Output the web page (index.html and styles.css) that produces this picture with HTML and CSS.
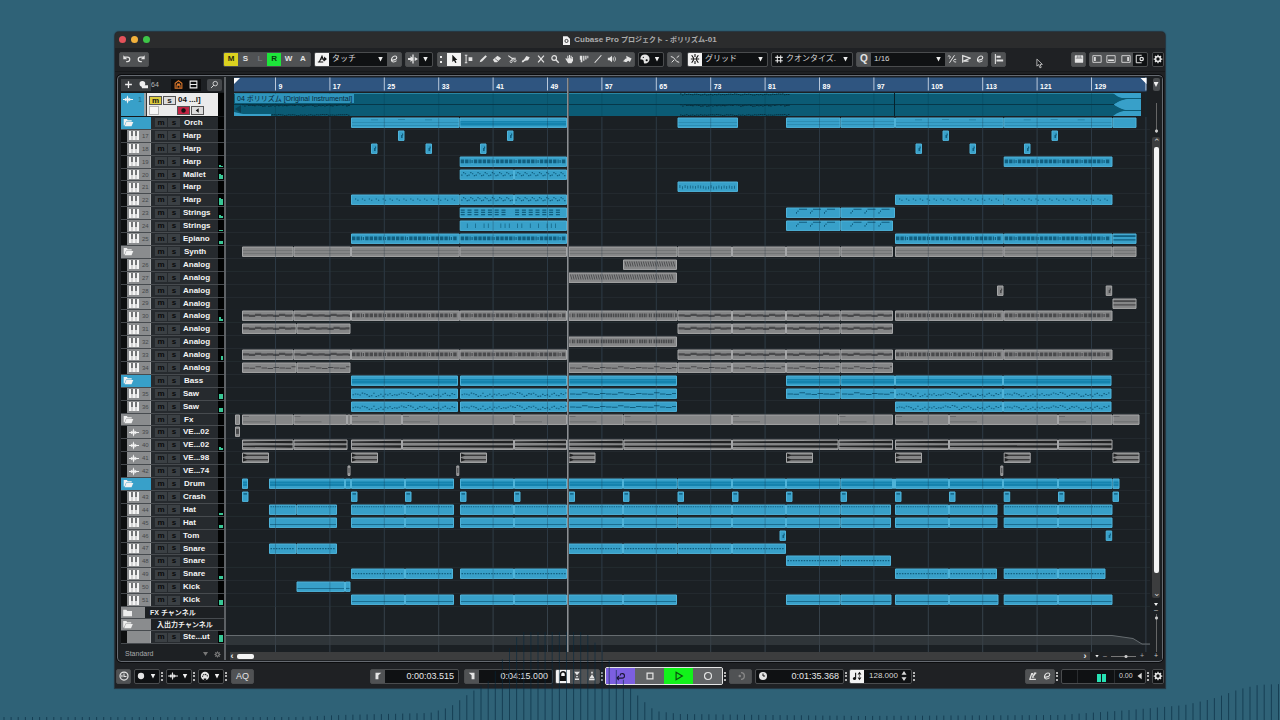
FILE: index.html
```html
<!DOCTYPE html>
<html lang="ja">
<head>
<meta charset="utf-8">
<title>Cubase Pro プロジェクト - ポリリズム-01</title>
<link rel="stylesheet" href="styles.css">
</head>
<body>
<svg class="sprite" aria-hidden="true">
  <symbol id="undo" viewBox="0 0 12 12"><path d="M3 3.6h3.6a2.6 2.6 0 0 1 0 5.4H5" fill="none" stroke="currentColor" stroke-width="1.5"/><path d="M1.6 1.4v4.8h4.6z"/></symbol>
  <symbol id="redo" viewBox="0 0 12 12"><path d="M9 3.6H5.4a2.6 2.6 0 0 0 0 5.4H7" fill="none" stroke="currentColor" stroke-width="1.5"/><path d="M10.4 1.4v4.8H5.8z"/></symbol>
  <symbol id="auto" viewBox="0 0 12 12"><path d="M1 9.500h6.500M3 9 6 2.500 8 8M5 6h6" fill="none" stroke="currentColor" stroke-width="1.300"/><path d="m8.500 3 3.300 3-3.300 3z"/></symbol>
  <symbol id="edit" viewBox="0 0 12 12"><path d="M3 7.2c3 .6 6.600-.8 6.300-3.200C9 1.800 5.600 2 3.900 4.300 2 7 3 9.700 5.400 9.600c1.400 0 2.600-.7 3.600-1.600" fill="none" stroke="currentColor" stroke-width="1.300"/></symbol>
  <symbol id="scroll" viewBox="0 0 12 12"><path d="M5.200 .5h1.600v11H5.200zM0 4.800h3V2.500L7 6 3 9.500V7.200H0zM8 3.500 12 6 8 8.500z"/></symbol>
  <symbol id="pointer" viewBox="0 0 12 12"><path d="M4 1v8.500l2-1.800 1.500 3.200 1.500-.7-1.500-3.100H10z"/></symbol>
  <symbol id="range" viewBox="0 0 12 12"><path d="M1 1.500h3M1 10.500h3M2.500 1.500v9" fill="none" stroke="currentColor" stroke-width="1.200"/><path d="M5.500 4h4.500v4.500H5.500z"/></symbol>
  <symbol id="pencil" viewBox="0 0 12 12"><path d="m2 10 1-2.800L9 1.500 10.700 3 4.800 9z"/></symbol>
  <symbol id="eraser" viewBox="0 0 12 12"><path d="m1 7 5.500-5L11 5 6 10H3z"/><path d="m3.500 5.500 4 3" stroke="#505254" stroke-width=".8"/></symbol>
  <symbol id="scissors" viewBox="0 0 12 12"><path d="M1.500 2 8 6.500M5.500 5h5M6 5v3" fill="none" stroke="currentColor" stroke-width="1.300"/><circle cx="9.500" cy="8" r="1.400" fill="none" stroke="currentColor"/><circle cx="5" cy="9" r="1.300" fill="none" stroke="currentColor"/></symbol>
  <symbol id="glue" viewBox="0 0 12 12"><path d="M1 10c0-3 2-2 3-4l2.500-3.500 4 1.500-2 3.500L5 8c-1 0-1 2-4 2z"/></symbol>
  <symbol id="mute" viewBox="0 0 12 12"><path d="m2.500 2 7 8m0-8-7 8" stroke="currentColor" stroke-width="1.500"/></symbol>
  <symbol id="search" viewBox="0 0 12 12"><circle cx="5" cy="4.800" r="2.800" fill="none" stroke="currentColor" stroke-width="1.400"/><path d="m7 7 3.500 3.500" stroke="currentColor" stroke-width="1.700"/></symbol>
  <symbol id="find" viewBox="0 0 12 12"><circle cx="7" cy="4.800" r="3" fill="none" stroke="currentColor"/><path d="m5 7-3.500 3.500" stroke="currentColor" stroke-width="1.200"/></symbol>
  <symbol id="hand" viewBox="0 0 12 12"><path d="M1.500 5.500 3 5l1 1.500V2h1.200v3H6V1.200h1.300V5H8V2h1.200v4h.6V3.500h1V8L9 11H5z"/></symbol>
  <symbol id="comp" viewBox="0 0 12 12"><path d="M1 2h3v8H2V7H1zM5 2h1.500v6H5zM7.500 2H9v4.500H7.500zM10 2h1.200v3H10z"/></symbol>
  <symbol id="line" viewBox="0 0 12 12"><path d="m2 10.500 8-9" stroke="currentColor" stroke-width="1.300"/></symbol>
  <symbol id="speaker" viewBox="0 0 12 12"><path d="M1 4.500h2L6 2v8L3 7.500H1z"/><path d="M7.500 4v4M9 3c1.500 2 1.500 4 0 6" fill="none" stroke="currentColor"/></symbol>
  <symbol id="bucket" viewBox="0 0 12 12"><path d="m5 2 6.500 3.500L9.500 9.500 7.500 8 5 10 .5 8.500c3 0 2-3 5-3z"/></symbol>
  <symbol id="palette" viewBox="0 0 12 12"><path d="M6 .5A5.500 5.500 0 0 0 .5 5.500C.5 8 3 6.500 4 7.500s0 4 2 4a5.500 5.500 0 0 0 0-11z"/><circle cx="4" cy="4" r=".8" fill="#0c0e10"/><circle cx="8" cy="7.500" r="1.300" fill="#0c0e10"/></symbol>
  <symbol id="snapcurve" viewBox="0 0 12 12"><path d="M1 3c5 0 5 7 10 7M2 10l3-3M8 4.500 11 2" fill="none" stroke="currentColor" stroke-width="1.200"/></symbol>
  <symbol id="snap" viewBox="0 0 12 12"><path d="M6 0v3.500M6 8.500V12M2 1.500l3 4.500-3 4.500M10 1.500 7 6l3 4.500M1 6h3M8 6h3" fill="none" stroke="currentColor" stroke-width="1.300"/></symbol>
  <symbol id="hash" viewBox="0 0 12 12"><path d="M4 1.500v9M8 1.500v9M1.500 4h9M1.500 8h9" stroke="currentColor" stroke-width="1.300"/></symbol>
  <symbol id="soft" viewBox="0 0 12 12"><path d="m9 1.500-6 9M1 3c2-2 4 0 2 2.500M11 6.500c-4-1-4 4 0 3" fill="none" stroke="currentColor" stroke-width="1.200"/></symbol>
  <symbol id="flag" viewBox="0 0 12 12"><path d="M2 10.500V2l9 3L3 8.500h6" fill="none" stroke="currentColor" stroke-width="1.400"/></symbol>
  <symbol id="align" viewBox="0 0 12 12"><path d="M1 0h1.300v12H1zM3 2h5v2.600H3zM3 6.500h8V9H3z"/></symbol>
  <symbol id="window" viewBox="0 0 12 12"><rect x="1" y="1.500" width="10" height="9" rx="1"/><path d="M2 5h8M4 1.500V5M6 1.500V5M8 1.500V5" stroke="#6b6d70" stroke-width=".8"/></symbol>
  <symbol id="zleft" viewBox="0 0 12 12"><path d="M1 2h10v8H1z" fill="none" stroke="currentColor"/><path d="M2.500 3.500h2v5h-2z"/></symbol>
  <symbol id="zdown" viewBox="0 0 12 12"><path d="M1 2h10v8H1z" fill="none" stroke="currentColor"/><path d="M2.500 6.500h7v2h-7z"/></symbol>
  <symbol id="zright" viewBox="0 0 12 12"><path d="M1 2h10v8H1z" fill="none" stroke="currentColor"/><path d="M7.500 3.500h2v5h-2z"/></symbol>
  <symbol id="zset" viewBox="0 0 12 12"><path d="M8 1.500H1.500v9H8" fill="none" stroke="currentColor" stroke-width="1.200"/><circle cx="8" cy="6" r="2" fill="none" stroke="currentColor" stroke-width="1.500"/></symbol>
  <symbol id="gear" viewBox="0 0 12 12"><circle cx="6" cy="6" r="3" fill="none" stroke="currentColor" stroke-width="2"/><path d="M6 .8v2M6 9.200v2M.8 6h2M9.200 6h2M2.300 2.300l1.500 1.500M8.200 8.200l1.500 1.500M2.300 9.700l1.500-1.500M8.200 3.800l1.500-1.500" stroke="currentColor" stroke-width="1.500"/></symbol>
  <symbol id="doc" viewBox="0 0 8 10"><path d="M0 0h5l3 3v7H0z"/><circle cx="4" cy="5.500" r="1.800" fill="none" stroke="#2b2c2d"/></symbol>
  <symbol id="piano" viewBox="0 0 10 9"><path d="M0 0h2v5h.700v4H0zM3.900 0h2.200v5h.6v4H3.300V5h.6zM8 0h2v9H7.300V5H8z" fill="#f4f4f4"/><path d="M2 0h1.900v5H2zM6.100 0H8v5H6.100z" fill="#707274"/></symbol>
  <symbol id="wave" viewBox="0 0 12 10"><path d="M0 4.500h2L3 3l1 1.500L5.200 0 7 4.500 8 3l1 1.500h3v1H9L8 7 7 5.500 5.500 10 4 5.500 3 7 2 5.500H0z"/></symbol>
  <symbol id="open" viewBox="0 0 12 10"><path d="M0 0h4l1 1.500h5V3H3L1 8H0z"/><path d="M3.300 3.700H12L9.800 9H1.200z"/></symbol>
  <symbol id="closed" viewBox="0 0 12 10"><path d="M0 1h4l1 1.500h6V9H0z"/></symbol>
  <symbol id="plus" viewBox="0 0 12 12"><path d="M6 1.500v9M1.500 6h9" stroke="currentColor" stroke-width="1.700"/></symbol>
  <symbol id="clouds" viewBox="0 0 12 12"><circle cx="4.500" cy="5" r="3.800"/><path d="M3 7h9v4H4z"/></symbol>
  <symbol id="house" viewBox="0 0 12 12"><path d="M1.500 11V4.500L6 1l4.500 3.500V11zM4 11V7h4v4M4 5.500h4" fill="none" stroke="currentColor" stroke-width="1.400"/></symbol>
  <symbol id="list" viewBox="0 0 12 12"><path d="M1.500 1.500h9v9h-9zM1.500 6h9" fill="none" stroke="currentColor" stroke-width="1.400"/></symbol>
  <symbol id="ring" viewBox="0 0 12 12"><circle cx="6" cy="6" r="4.800" fill="none" stroke="currentColor" stroke-width="1.500"/><path d="M6 3v3.500h3M3.500 4.500v3" fill="none" stroke="currentColor" stroke-width="1.300"/></symbol>
  <symbol id="dot" viewBox="0 0 12 12"><circle cx="6" cy="6" r="3.800"/></symbol>
  <symbol id="midi" viewBox="0 0 12 12"><circle cx="6" cy="6" r="5"/><path d="M3 7a3 3 0 0 1 6 0" fill="none" stroke="#0c0e10" stroke-width="1.300" stroke-dasharray="1.400 1"/><path d="M4.500 11V9h3v2z" fill="#0c0e10"/></symbol>
  <symbol id="locl" viewBox="0 0 12 12"><path d="M3 2h7L6.500 5v5H3z"/></symbol>
  <symbol id="locr" viewBox="0 0 12 12"><path d="M9 2H2l3.500 3v5H9z"/></symbol>
  <symbol id="lock" viewBox="0 0 12 12"><path d="M3 11V4a3 3 0 0 1 6 0v7z" fill="none" stroke="currentColor" stroke-width="1.800"/><path d="M3 6h6v5H3z"/></symbol>
  <symbol id="pin" viewBox="0 0 12 12"><path d="M2.500 1h7L6 5zM5 6h2v1.500H5zM3.500 9h5v1.800h-5z"/></symbol>
  <symbol id="pout" viewBox="0 0 12 12"><path d="M5 1h2v2H5zM6 4l3 4.500H3zM2.500 9h7v2h-7z"/></symbol>
  <symbol id="cycle" viewBox="0 0 12 12"><path d="M1 8.500h6.500a2.700 2.700 0 1 0-2.700-3M1 8.500 3.500 6M1 8.500 3.500 11" fill="none" stroke="currentColor" stroke-width="1.300"/></symbol>
  <symbol id="stop" viewBox="0 0 12 12"><path d="M2.500 2.500h7v7h-7z" fill="none" stroke="currentColor" stroke-width="1.500"/></symbol>
  <symbol id="play" viewBox="0 0 12 12"><path d="M2.500 1.500 10 6l-7.500 4.500z" fill="none" stroke="currentColor" stroke-width="1.400"/></symbol>
  <symbol id="rec" viewBox="0 0 12 12"><circle cx="6" cy="6" r="4.200" fill="none" stroke="currentColor" stroke-width="1.400"/></symbol>
  <symbol id="moon" viewBox="0 0 12 12"><path d="M6 2a4 4 0 1 1 0 8" fill="none" stroke="currentColor" stroke-width="1.600"/><circle cx="4.500" cy="6" r="1.500"/></symbol>
  <symbol id="clock" viewBox="0 0 12 12"><circle cx="6" cy="6" r="4.800"/><path d="M6 3v3h2.500" fill="none" stroke="#111" stroke-width="1.200"/></symbol>
  <symbol id="tempo" viewBox="0 0 12 12"><circle cx="3" cy="9" r="1.900"/><path d="M3.700 2H5v7H3.700zM9 1l2.300 3.300H6.700zM9 11 6.700 7.700h4.600zM8.300 5.300h1.400v1.400H8.300z"/></symbol>
  <symbol id="metro" viewBox="0 0 12 12"><path d="M2 10.500 4.500 3h1L7 8M1.500 10h8M5 8l4.500-6M7 2.500h3" fill="none" stroke="currentColor" stroke-width="1.500"/></symbol>
  <symbol id="updown" viewBox="0 0 8 12"><path d="m4 0 3 4.500H1zM4 12 1 7.500h6z"/></symbol>
  <symbol id="mon" viewBox="0 0 12 12"><path d="M8 2v8L3 6z"/></symbol>
</svg>

<main class="window">
  <header class="titlebar">
    <div class="lights"><i class="red"></i><i class="amber"></i><i class="green"></i></div>
    <h1 class="title"><svg class="doc"><use href="#doc"/></svg>Cubase Pro <span class="jp">プロジェクト</span> - <span class="jp">ポリリズム</span>-01</h1>
  </header>

  <nav class="toolbar">
    <div class="group history"><button aria-label="元に戻す"><svg><use href="#undo"/></svg></button><button aria-label="やり直す"><svg><use href="#redo"/></svg></button></div>
    <div class="group states"><button class="yellow">M</button><button>S</button><button class="faint">L</button><button class="lime">R</button><button>W</button><button>A</button></div>
    <div class="group mode">
      <button class="lit" aria-label="オートメーション"><svg><use href="#auto"/></svg></button>
      <div class="drop"><select aria-label="オートメーションモード"><option>タッチ</option></select></div>
      <button aria-label="設定"><svg><use href="#edit"/></svg></button>
    </div>
    <div class="group follow"><button aria-label="オートスクロール"><svg><use href="#scroll"/></svg></button><button class="dark arrow" aria-label="スクロール設定"></button></div>
    <div class="group tools" id="tools"></div>
    <div class="group colors"><button class="dark" aria-label="カラー"><svg><use href="#palette"/></svg></button><button class="dark arrow" aria-label="カラーメニュー"></button></div>
    <div class="group single"><button aria-label="ゼロクロス"><svg><use href="#snapcurve"/></svg></button></div>
    <div class="group snap"><button class="lit" aria-label="スナップ"><svg><use href="#snap"/></svg></button><div class="drop"><select aria-label="スナップタイプ"><option>グリッド</option></select></div></div>
    <div class="group quant"><button class="dark" aria-label="グリッドタイプ"><svg><use href="#hash"/></svg></button><div class="drop"><select aria-label="グリッド間隔"><option>クオンタイズ.</option></select></div></div>
    <div class="group value"><button class="big">Q</button><div class="drop"><select aria-label="クオンタイズ値"><option>1/16</option></select></div><button aria-label="ソフト"><svg><use href="#soft"/></svg></button><button aria-label="適用"><svg><use href="#flag"/></svg></button><button aria-label="パネル"><svg><use href="#edit"/></svg></button></div>
    <div class="group single"><button aria-label="整列"><svg><use href="#align"/></svg></button></div>
    <div class="group single right"><button aria-label="ワークスペース"><svg><use href="#window"/></svg></button></div>
    <div class="group zones"><button aria-label="左ゾーン"><svg><use href="#zleft"/></svg></button><button aria-label="下ゾーン"><svg><use href="#zdown"/></svg></button><button aria-label="右ゾーン"><svg><use href="#zright"/></svg></button><button class="dark" aria-label="レイアウト"><svg><use href="#zset"/></svg></button></div>
    <div class="group cog"><button class="dark" aria-label="ツールバー設定"><svg><use href="#gear"/></svg></button></div>
  </nav>

  <section class="project">
    <div class="list">
      <div class="list-head">
        <button aria-label="トラックを追加"><svg><use href="#plus"/></svg></button>
        <button aria-label="プリセット"><svg><use href="#clouds"/></svg></button>
        <span class="count">64</span>
        <button class="orange black" aria-label="表示"><svg><use href="#house"/></svg></button>
        <button class="black" aria-label="一覧"><svg><use href="#list"/></svg></button>
        <button class="find" aria-label="検索"><svg><use href="#find"/></svg></button>
      </div>
      <div class="selected">
        <div class="tag"><svg><use href="#wave"/></svg><span>1</span></div>
        <div class="strip"></div>
        <div class="body">
          <div class="line"><button class="ms on">m</button><button class="ms">s</button><b>04 ...l]</b></div>
          <div class="line second"><input type="checkbox" aria-label="フリーズ"><button class="arm" aria-label="録音可能"><svg><use href="#dot"/></svg></button><button class="ms" aria-label="モニター"><svg><use href="#mon"/></svg></button></div>
        </div>
        <div class="meter"></div>
      </div>
      <div class="tracks" id="tracks"></div>
      <div class="extra"><div class="chan"><svg><use href="#closed"/></svg><span>FX チャンネル</span></div><div class="chan io"><svg><use href="#open"/></svg><span>入出力チャンネル</span></div></div>
      <div id="output"></div>
      <div class="list-foot"><span>Standard</span><i class="tri"></i><svg><use href="#gear"/></svg></div>
    </div>

    <div class="timeline" id="timeline">
      <div class="ruler" id="ruler"></div>
      <div class="event" id="event"><span>04 ポリリズム [Original Instrumental]</span></div>
      <div class="lanes" id="lanes"></div>
      <div class="lower" id="lower"></div>
      <div class="hscroll"><i class="chev">‹</i><i class="thumb"></i><i class="chev end">›</i><div class="hzoom"><i class="tri"></i><span>–</span><i class="rail"></i><span>+</span></div></div>
      <div class="playhead"></div>
    </div>

    <div class="side">
      <button class="arrow" aria-label="ルーラー設定"></button>
      <div class="wavezoom"></div>
      <div class="vscroll"><i class="chev">⌃</i><i class="bar"></i><i class="chev">⌄</i></div>
      <div class="vzoom"><i class="tri"></i><span>–</span><i class="rail"></i><span>+</span></div>
    </div>
  </section>

  <footer class="transport">
    <div class="group single"><button aria-label="アクティブ"><svg><use href="#ring"/></svg></button></div>
    <div class="group pair"><button class="dark" aria-label="録音モード"><svg><use href="#dot"/></svg></button><button class="dark arrow" aria-label="録音メニュー"></button></div><i class="grip"></i>
    <div class="group pair"><button class="dark" aria-label="オーディオ"><svg><use href="#wave"/></svg></button><button class="dark arrow" aria-label="オーディオメニュー"></button></div><i class="grip"></i>
    <div class="group pair"><button class="dark" aria-label="MIDI"><svg><use href="#midi"/></svg></button><button class="dark arrow" aria-label="MIDIメニュー"></button></div><i class="grip"></i>
    <div class="group aq"><button>AQ</button></div>
    <div class="group locator first"><button aria-label="左ロケーター"><svg><use href="#locl"/></svg></button><output>0:00:03.515</output></div>
    <div class="group locator"><button aria-label="右ロケーター"><svg><use href="#locr"/></svg></button><output>0:04:15.000</output></div>
    <div class="group punch"><button class="lit" aria-label="ロック"><svg><use href="#lock"/></svg></button><button aria-label="パンチイン"><svg><use href="#pin"/></svg></button><button aria-label="パンチアウト"><svg><use href="#pout"/></svg></button></div><i class="grip tight"></i>
    <div class="group play"><button class="purple" aria-label="サイクル"><svg><use href="#cycle"/></svg></button><button aria-label="停止"><svg><use href="#stop"/></svg></button><button class="go" aria-label="再生"><svg><use href="#play"/></svg></button><button aria-label="録音"><svg><use href="#rec"/></svg></button></div><i class="grip"></i>
    <div class="group off"><button aria-label="プリロール" disabled><svg><use href="#moon"/></svg></button></div>
    <div class="group locator now"><button class="dark" aria-label="時間形式"><svg><use href="#clock"/></svg></button><output>0:01:35.368</output></div><i class="grip tight"></i>
    <div class="group tempo"><button class="lit" aria-label="テンポトラック"><svg><use href="#tempo"/></svg></button><output>128.000</output><svg><use href="#updown"/></svg></div><i class="grip"></i>
    <div class="group click"><button aria-label="メトロノーム"><svg><use href="#metro"/></svg></button><button aria-label="クリック設定"><svg><use href="#edit"/></svg></button></div><i class="grip"></i>
    <div class="group level"><div class="cell"></div><div class="cell vu"><i></i><i></i></div><output>0.00</output><svg><use href="#mon"/></svg></div><i class="grip tight"></i>
    <div class="group cog"><button class="dark" aria-label="トランスポート設定"><svg><use href="#gear"/></svg></button></div>
  </footer>
  <svg class="cursor" viewBox="0 0 8 12"><path d="M1 1v8l2-1.800L4.500 11l1.500-.7L4.600 7H7.300z" fill="#15171a" stroke="#d8d8d8" stroke-width=".9"/></svg>
</main>
<svg class="spectrum" id="spectrum" viewBox="0 0 1280 100" preserveAspectRatio="none" aria-hidden="true"></svg>
<script src="script.js"></script>
</body>
</html>
```

FILE: styles.css
```css
* { box-sizing: border-box; }
:root { --lanes: 490px; --blue: #38a0c9; }
body { margin: 0; min-height: 100vh; padding: 32px 115px; background: #2f6277; overflow: hidden; position: relative; font-family: "Liberation Sans", "Noto Sans CJK JP", sans-serif; font-size: 8px; line-height: 10px; color: #d8d8d8; }
svg { fill: currentColor; display: block; flex: none; }
.sprite { position: absolute; width: 0; height: 0; }
button, select, output { font: inherit; color: inherit; }
button { border: 0; margin: 0; padding: 0; background: none; display: flex; align-items: center; justify-content: center; min-width: 0; }
i { font-style: normal; }

.window { position: relative; background: #1f2124; box-shadow: 0 0 1px 1px #26333c; border-radius: 4px 4px 0 0; }
.titlebar { position: relative; display: flex; align-items: center; justify-content: center; height: 16px; background: #2b2c2d; border-radius: 4px 4px 0 0; }
.lights { position: absolute; left: 4px; top: 4px; display: flex; gap: 5px; }
.lights i { width: 7px; height: 7px; border-radius: 50%; }
.red { background: #e4525a; }
.amber { background: #f2b13c; }
.green { background: #3ec648; }
.title { margin: 0; display: flex; align-items: center; white-space: pre; font-size: 8px; font-weight: bold; color: #adadad; }
.title .jp { font-size: 7px; }
.doc { width: 7px; height: 9px; margin-right: 4px; color: #f2f2f2; }

.toolbar { display: flex; align-items: center; height: 24px; padding: 0 1px 1px 4px; gap: 3px; border-bottom: 1px solid #17191b; }
.group { display: flex; height: 15px; background: #505254; border: 1px solid #4a4c4e; border-radius: 2px; overflow: hidden; flex: none; }
.group button { flex: 1; font-weight: bold; font-size: 8px; color: #e4e4e4; }
.group svg { width: 10px; height: 10px; }
.history { width: 30px; margin-right: 71px; }
.states { width: 88px; }
.group .yellow { background: #dcd21f; color: #2a2a10; }
.group .lime { background: #1de53a; color: #0b3a12; }
.group .faint { color: #77797b; }
.group .lit { background: #f3f3f3; color: #111; }
.group .dark, .drop { background: #0f1113; }
.group .big { font-size: 10px; }
.mode { width: 88px; }
.mode button, .snap button, .quant button { flex: 0 0 14px; }
.value button { flex: 0 0 14px; }
.drop { position: relative; flex: 1; display: flex; }
.drop select { appearance: none; border: 0; background: none; width: 100%; padding: 0 3px; font-size: 8px; outline: 0; }
.quant .drop select { padding: 0; }
.arrow::after, .drop::after, .tri { content: ""; width: 5px; height: 5px; background: #f0f0f0; clip-path: polygon(0 0, 100% 0, 50% 100%); }
.drop::after { position: absolute; right: 4px; top: 4px; }
.follow { width: 28px; margin-right: 1px; }
.tools { width: 198px; }
.tools .handle { flex: 0 0 7px; border-left: 2px dotted #eee; margin: 3px 0 3px 2px; }
.colors { width: 26px; }
.single { width: 15px; }
.snap { width: 81px; margin-left: 2px; }
.quant { width: 82px; }
.value { width: 132px; }
.right { margin-left: auto; }
.zones { width: 59px; }
.cog { width: 12px; margin-left: 1px; }

.project { display: grid; grid-template-columns: 105px 1fr 12px; margin: 3px 2px 2px; padding: 1px 0 1px 3px; border: 1px solid #656a71; border-radius: 4px; background: #1d2023; outline: 1px solid #0b0c0e; }
.list { border-right: 2px solid #5d6165; background: #15181a; }
.list-head { display: flex; align-items: center; height: 15px; background: #1d2023; color: #f0f0f0; }
.list-head button { width: 15px; height: 12px; background: #3a3d40; }
.list-head svg { width: 9px; height: 9px; }
.count { flex: 1; font-size: 7px; color: #b8b8b8; }
.list-head .black { background: #0c0d0e; }
.list-head .orange { color: #e07a2c; }
.list-head .find { background: #44474a; border-radius: 2px; margin: 0 2px 0 6px; }
.selected { display: flex; height: 25px; padding: 1px 0; }
.tag { width: 23px; display: flex; gap: 5px; padding: 2px; background: var(--blue); color: #f4f4f4; }
.tag svg { width: 10px; height: 9px; }
.tag span { font-size: 7px; color: #1c6687; }
.strip { width: 3px; background: #9aa4a8; border-right: 1px solid #333; }
.selected .body { flex: 1; background: #ebebeb; padding: 2px; color: #151515; }
.line { display: flex; align-items: center; height: 10px; gap: 1px; }
.line b { font-size: 8px; margin-left: 1px; white-space: nowrap; }
.selected .ms { width: 13px; height: 9px; background: #ddd; border: 1px solid #555; font-weight: bold; font-size: 8px; line-height: 7px; }
.selected .on { background: #dccb3e; }
.second input { appearance: none; margin: 0 17px 0 0; width: 10px; height: 9px; border: 1px solid #b5b5b5; background: #f7f7f7; }
.arm { width: 13px; height: 9px; background: #c22443; border: 1px solid #555; }
.line svg { width: 7px; height: 7px; }
.meter { width: 6px; background: #020303; display: flex; align-items: flex-end; padding: 1px; }
.meter i { flex: 1; background: #38c795; }

.tracks { display: grid; grid-auto-rows: 1fr; height: var(--lanes); }
.track { display: flex; min-height: 0; overflow: hidden; background: #262a2e; border-bottom: 1px solid #474b4f; color: #f4f4f4; }
.badge { width: 30px; display: flex; align-items: center; background: #8a8c8e; border-left: 6px solid #0d0f10; border-right: 1px solid #a0a3a5; gap: 3px; padding-left: 2px; font-size: 6px; color: #45484a; }
.badge svg { width: 10px; height: 9px; color: #f2f2f2; }
.folder .badge { border-left: 0; }
.folder .badge svg { width: 11px; height: 8px; }
.folder.blue .badge { background: var(--blue); border-right-color: var(--blue); }
.track .pair-ms { display: flex; gap: 1px; align-items: center; margin-left: 4px; }
.track .pair-ms button { width: 12px; height: 9px; background: #3b4044; color: #090a0b; font-weight: bold; font-size: 8px; line-height: 8px; }
.track b { flex: 1; padding-left: 3px; line-height: 12px; white-space: nowrap; }
.folder b { padding-left: 4px; }
.extra { height: 24px; }
.chan { display: flex; align-items: center; height: 12px; border-bottom: 1px solid #474b4f; background: linear-gradient(90deg, #8a8c8e 24px, #1d2023 24px); font-weight: bold; font-size: 7px; color: #eee; padding-left: 2px; }
.chan svg { width: 10px; height: 8px; }
.chan span { margin-left: 17px; white-space: nowrap; }
.chan.io { background: linear-gradient(90deg, #8a8c8e 30px, #1d2023 30px); }
.chan.io span { margin-left: 24px; }
#output .track { height: 13px; }
.list-foot { display: flex; align-items: center; height: 16px; padding: 4px 3px 0 4px; gap: 6px; font-size: 7px; color: #a9abad; background: #1d2023; }
.list-foot span { flex: 1; }
.list-foot .tri { background: #777; height: 4px; }
.list-foot svg { width: 7px; height: 7px; color: #888; }

.timeline { position: relative; min-width: 0; background: #1b2024; }
.timeline svg { width: 100%; height: 100%; }
.ruler { height: 15px; position: relative; }
.ruler span { position: absolute; top: 5px; font-size: 7px; font-weight: bold; color: #fff; padding-left: 3px; }
.event { position: relative; height: 25px; }
.event span { position: absolute; left: 9px; top: 2px; padding: 0 2px; background: #2f94bc; color: #08283a; font-size: 7px; line-height: 9px; white-space: nowrap; }
.lanes { display: grid; grid-auto-rows: 1fr; height: var(--lanes); }
.lane { min-height: 0; overflow: hidden; }
.lower { height: 45px; }
.hscroll { display: flex; align-items: center; height: 8px; background: linear-gradient(90deg, #1d2023 4px, #3c3d3e 4px); color: #eee; }
.chev { font-size: 9px; line-height: 6px; width: 6px; text-align: center; }
.hscroll .chev { margin-left: 3px; font-weight: bold; }
.hscroll .thumb { width: 17px; height: 5px; margin-left: 2px; border-radius: 2px; background: #f4f4f4; }
.hscroll .end { margin-left: auto; }
.hzoom { display: flex; align-items: center; gap: 4px; width: 60px; height: 8px; margin-left: 2px; padding: 0 6px 0 5px; background: #1d2023; font-size: 7px; color: #aaa; }
.hzoom .tri, .vzoom .tri { width: 4px; height: 3px; }
.hzoom .rail { flex: 1; height: 3px; background: radial-gradient(circle at 60% 50%, #ccc 1px, transparent 2px), linear-gradient(#1d2023 1px, #777 1px, #777 2px, #1d2023 2px); }
.playhead { position: absolute; top: 1px; bottom: 8px; left: 36.9%; width: 2px; background: #8b8f93; border-right: 1px solid #5a5e62; }

.side { display: flex; flex-direction: column; align-items: center; background: #1d2023; color: #ccc; }
.side button { width: 7px; height: 13px; margin-top: 1px; background: #4a4d50; border-radius: 2px; }
.wavezoom { width: 3px; height: 30px; margin: 12px 0 4px; background: radial-gradient(circle at 50% 28px, #ccc 1px, transparent 2px), linear-gradient(90deg, transparent 1px, #666 1px, #666 2px, transparent 2px); }
.vscroll { flex: 1; display: flex; flex-direction: column; align-items: center; width: 8px; background: #3c3d3e; border-radius: 2px; padding: 2px 0; }
.vscroll .bar { flex: 1; width: 5px; margin: 2px 0 17px; border-radius: 2px; background: #f4f4f4; }
.vzoom { display: flex; flex-direction: column; align-items: center; height: 62px; padding-top: 5px; font-size: 7px; line-height: 8px; }
.vzoom .rail { flex: 1; width: 3px; background: radial-gradient(circle at 50% 4px, #ccc 1px, transparent 2px), linear-gradient(90deg, transparent 1px, #666 1px, #666 2px, transparent 2px); }

.transport { display: flex; align-items: center; height: 24px; padding: 0 1px; background: #1f2124; }
.grip { flex: none; width: 2px; height: 9px; margin: 0 3px 0 1px; border-left: 2px dotted #b5b5b5; }
.grip.tight { margin-right: 2px; }
.pair { width: 26px; }
.transport .single { margin-right: 3px; }
.aq { width: 23px; margin-left: 1px; }
.group.aq button { font-weight: normal; font-size: 9px; }
.locator { width: 89px; margin-right: 5px; }
.locator.first { margin-left: 116px; }
.locator button { flex: 0 0 14px; }
.locator output { flex: 1; background: #0f1113; font-size: 9px; line-height: 13px; text-align: right; padding-right: 4px; color: #e8e8e8; }
.locator.now { margin-right: 0; }
.punch { width: 45px; margin-left: -3px; }
.play { width: 118px; height: 18px; border-color: #e6e6e6; }
.group.play button { background: #626466; }
.group.play .purple { background: #7c5fe0; color: #1b1635; }
.group.play .go { background: #12f21a; color: #0b4a10; }
.off { width: 23px; margin-right: 3px; }
.off button { color: #888; }
.tempo { width: 63px; background: #0f1113; align-items: center; }
.tempo button { flex: 0 0 14px; height: 13px; }
.tempo output { flex: 1; padding-left: 5px; }
.tempo svg { margin-right: 2px; }
.tempo button svg { margin: 0; }
.tempo + .grip { margin-right: auto; }
.click { width: 30px; }
.level { width: 85px; background: #0f1113; align-items: center; }
.level .cell { width: 16px; height: 13px; border-right: 1px solid #2a2d30; }
.level .vu { width: 37px; display: flex; justify-content: flex-end; align-items: flex-end; gap: 1px; padding: 0 8px 1px 0; }
.vu i { width: 4px; height: 8px; background: #27e2b4; }
.level output { flex: 1; padding-left: 4px; font-size: 7px; }

.cursor { position: absolute; left: 88%; top: 26px; width: 7px; height: 11px; margin-left: -3px; }
.spectrum { position: absolute; left: 0; bottom: 0; width: 100%; height: 100px; pointer-events: none; }
.spectrum path { stroke: #07293e; stroke-width: 1; opacity: .6; }
```

FILE: script.js
```js
// Toolbox buttons
const tools = ['pointer', 'range', 'pencil', 'eraser', 'scissors', 'glue', 'mute', 'search', 'hand', 'comp', 'line', 'speaker', 'bucket'];
document.getElementById('tools').innerHTML = '<i class="handle"></i>' + tools.map((t, i) =>
  `<button class="${i ? '' : 'lit'}" aria-label="${t}"><svg><use href="#${t}"/></svg></button>`).join('');

// Horizontal scale of the arrangement: eight bars span 54.4 units.
const X0 = 226, W = 924;
const marks = Array.from({ length: 17 }, (_, i) => 275.5 + i * 54.4);
const box = h => `viewBox="${X0} 0 ${W} ${h}" preserveAspectRatio="none"`;
const gridLines = (h, color, opacity = 1) => `<path d="${marks.map(x => `M${x} 0v${h}`).join('')}" stroke="${color}" opacity="${opacity}"/>`;
const rect = (x, y, w, h) => `M${x.toFixed(1)} ${y}h${w.toFixed(1)}v${h}h${(-w).toFixed(1)}z`;
const noise = n => { const v = Math.sin(n * 12.9898) * 43758.5453; return v - Math.floor(v); };

// Track list: kind, number, name, meter heights, clips.
// Each clip run is a pattern letter followed by its boundaries.
const F = 'folder', P = 'piano', A = 'wave';
const short = (list, kind = 'n') => list.map(x => [kind, x, x + 6.5]);
const hits = short([242, 351, 405, 460, 514, 568.5, 623, 677.5, 732, 786, 840.5, 895, 949, 1003.7, 1058, 1112.5], 'v');
const rows = [
  [F, '', 'Orch', 0, 0, [['b', 351, 459.5], ['B', 459.5, 567], ['b', 677.5, 738], ['g', 786, 840.5, 895], ['b', 895, 1003.7, 1112.5], ['-', 1112.5, 1136.5]], 1],
  [P, 17, 'Harp', 0, 0, short([398, 507, 942.5, 1051.5]), 1],
  [P, 18, 'Harp', 0, 0, short([371, 425.5, 480, 915.5, 969.5, 1024]), 1],
  [P, 19, 'Harp', 2, 1, [['d', 459.7, 567], ['d', 1003.7, 1112.5]], 1],
  [P, 20, 'Mallet', 5, 4, [['z', 459.7, 514, 567]], 1],
  [P, 21, 'Harp', 0, 0, [['y', 677.5, 738]], 1],
  [P, 22, 'Harp', 7, 6, [['p', 351, 459.7], ['z', 459.7, 514, 567], ['p', 895, 1003.7, 1112.5]], 1],
  [P, 23, 'Strings', 3, 2, [['k', 459.7, 567], ['w', 786, 840.5, 895]], 1],
  [P, 24, 'Strings', 1, 1, [['t', 459.7, 567], ['w', 786, 840.5, 893]], 1],
  [P, 25, 'Epiano', 3, 3, [['d', 351, 459.7, 567], ['d', 895, 1003.7, 1112.5], ['h', 1112.5, 1136.5]], 1],
  [F, '', 'Synth', 0, 0, [['g', 242, 293.5, 351, 459.7, 567], ['g', 568.5, 677.5, 732, 786, 840.5, 893], ['g', 895, 1003.7, 1112.5, 1136.5]], 0],
  [P, 26, 'Analog', 0, 0, [['x', 623, 677]], 0],
  [P, 27, 'Analog', 0, 0, [['x', 568.5, 677]], 0],
  [P, 28, 'Analog', 0, 0, short([997, 1105.7]), 0],
  [P, 29, 'Analog', 0, 0, [['h', 1112.5, 1136.5]], 0],
  [P, 30, 'Analog', 4, 2, [['m', 242, 293.5, 351], ['d', 351, 459.7, 567], ['e', 568.5, 677.5], ['m', 677.5, 732, 786, 840.5, 893], ['d', 895, 1003.7, 1112.5]], 0],
  [P, 31, 'Analog', 0, 0, [['m', 242, 296.5, 350.5], ['m', 677.5, 732, 786, 840.5, 893]], 0],
  [P, 32, 'Analog', 0, 0, [['e', 568.5, 677]], 0],
  [P, 33, 'Analog', 0, 4, [['m', 242, 293.5, 351], ['d', 351, 459.7, 567], ['m', 677.5, 732, 786, 840.5, 893], ['d', 895, 1003.7, 1112.5]], 0],
  [P, 34, 'Analog', 0, 0, [['c', 242, 296.5, 350.5], ['c', 568.5, 677.5, 732, 786, 840.5, 893]], 0],
  [F, '', 'Bass', 0, 0, [['B', 351, 458], ['B', 460, 567], ['B', 568.5, 677], ['B', 786, 840.5, 895, 1003, 1111.5]], 1],
  [P, 35, 'Saw', 5, 5, [['s', 351, 458], ['s', 460, 567], ['c', 568.5, 677], ['c', 786, 840.5, 895], ['s', 895, 1003, 1111.5]], 1],
  [P, 36, 'Saw', 4, 4, [['s', 351, 458], ['s', 460, 567], ['c', 568.5, 677], ['s', 895, 1003, 1111.5]], 1],
  [F, '', 'Fx', 0, 0, [['f', 235, 240], ['f', 242, 293.5, 347, 351, 402, 514, 567], ['f', 568.5, 623.5, 732, 838.5, 893], ['f', 895, 949, 1058, 1112.5, 1139.5]], 0],
  [A, 39, 'VE...02', 0, 0, [['n', 235, 240]], 0],
  [A, 40, 'VE...02', 3, 2, [['a', 242, 293.5, 347.5], ['a', 351, 402, 514, 567], ['a', 568.5, 623.5, 732, 838.5, 893], ['a', 895, 949, 1058, 1112.5]], 0],
  [A, 41, 'VE...98', 0, 0, [242, 351, 460, 568.5, 786, 895, 1003.7, 1112.5].map(x => ['q', x, x + 27]), 0],
  [A, 42, 'VE...74', 0, 0, [347.5, 456.3, 1000.3].map(x => ['n', x, x + 3]), 0],
  [F, '', 'Drum', 0, 0, [['r', 242, 248], ['r', 269, 345, 351, 405, 454], ['r', 460, 514, 567], ['r', 568.5, 623, 677.5, 732, 786, 840.5, 893, 895, 949, 1003, 1058, 1112.5, 1119.5]], 1],
  [P, 43, 'Crash', 0, 0, hits, 1],
  [P, 44, 'Hat', 2, 2, [['O', 269, 296.5, 337], ['O', 351, 405, 454], ['O', 460, 514, 567], ['O', 568.5, 623, 677.5, 732, 786, 840.5, 891], ['O', 895, 949, 997.5], ['O', 1003.7, 1058, 1112.5]], 1],
  [P, 45, 'Hat', 3, 3, [['l', 269, 337], ['l', 351, 405, 454], ['l', 460, 514, 567], ['l', 568.5, 623, 677.5, 732, 786, 840.5, 891], ['l', 895, 949, 997.5], ['l', 1003.7, 1058, 1112.5]], 1],
  [P, 46, 'Tom', 0, 0, short([779.5, 1105.7]), 1],
  [P, 47, 'Snare', 0, 0, [['o', 269, 296.5, 337], ['o', 568.5, 623, 677.5, 732, 786]], 1],
  [P, 48, 'Snare', 0, 0, [['o', 786, 840.5, 891]], 1],
  [P, 49, 'Snare', 3, 3, [['o', 351, 405, 453], ['o', 460, 514, 567], ['o', 895, 949, 997], ['o', 1003.7, 1058, 1105.5]], 1],
  [P, 50, 'Kick', 0, 0, [['l', 296.5, 345, 350.5]], 1],
  [P, 51, 'Kick', 5, 5, [['l', 351, 405, 454], ['l', 460, 514, 567], ['l', 568.5, 623, 677], ['l', 786, 840.5, 891.5], ['l', 895, 949, 998.5], ['l', 1003.7, 1058, 1112.5]], 1]
];

// Note or waveform preview inside a clip, returned as filled path data.
function preview(kind, a, b) {
  let d = '';
  const step = (from, gap, fn, room = 2) => { for (let x = a + from, i = 0; x < b - room; x += gap, i++) d += fn(x, i); };
  switch (kind) {
    case 'b': return rect(a + 1, 5.5, b - a - 2, .6) + rect(a + 1, 8, b - a - 2, .5) + (b - a > 70 ? rect(a + 20, 2.5, 7, .7) + rect(a + 47, 2, 7, .7) + rect(a + 74, 2.5, 7, .7) : '');
    case 'g': return rect(a + 1, 4.5, b - a - 2, .5) + rect(a + 1, 7.5, b - a - 2, .6);
    case 'n': return b - a > 5 ? rect(a + 3, 5, 1.6, 3) + rect(a + 4, 3.5, 1.2, 2) : rect(a + 1, 3, b - a - 2, 5);
    case 'v': return rect(a + 1.5, 2.2, b - a - 3, 1.4);
    case 'd': step(1, 4.4, (x, i) => i % 5 === 2 ? rect(x, 3.6, 1.2, 3.8) + rect(x + 2, 4, 1.2, 3) : rect(x, 3.6, 3.4, 3.8), 4); break;
    case 'e': step(1, 2.4, (x, i) => rect(x, 3.6, noise(i) > .3 ? 1.7 : .9, 3.8)); break;
    case 'z': step(1.5, 1.8, (x, i) => rect(x, [5.5, 3, 4.2, 6][i % 4], 1.3, 1.2)); break;
    case 'p': step(4, 2.3, (x, i) => i % 3 === 2 ? '' : rect(x, i % 3 ? 5.8 : 4.5, 1.2, 1.1)); break;
    case 'y': step(2, 2.6, (x, i) => rect(x, 4 + noise(i) * 1.5, .8, 3)); break;
    case 'k': step(1, 6.8, (x, i) => i === 7 ? '' : rect(x, 2.5, 4, 1.2) + rect(x, 4.8, 4, 1.2) + rect(x, 7, 4, 1.2), 5); break;
    case 't': step(3, 4.2, (x, i) => noise(i) > .45 ? rect(x, 3.5, .7, 4.5) : ''); break;
    case 'w': step(10, 14, (x, i) => rect(x + 3, 1.8, 8, .9) + rect(x, 5, 1, 1.8) + rect(x + 1.5, 3.5, 1, 1.5), 12); break;
    case 'h': return rect(a + 1, 2.2, b - a - 2, 1.8) + rect(a + 1, 6.2, b - a - 2, 1.3);
    case 'x': step(1.5, 2.3, x => `M${x.toFixed(1)} 2.5h.9l1.4 5h-.9z`, 4); break;
    case 'm': step(1, 6, (x, i) => rect(x, 4.3 + [0, .6, -.4, .3][i % 4], Math.min(6.2, b - x - 1), 2.2)); break;
    case 'c': step(1.5, 6, (x, i) => rect(x, 5.5 + [0, .4, -1.2, 0, .5, -.5][i % 6], Math.min(5.5, b - x - 1), 1)); break;
    case 's': step(1.5, 2.3, (x, i) => rect(x, 4 + noise(i + 3) * 4, 1.5, 1.1)); break;
    case 'f': return b - a > 20 ? rect(a + 1, 2, 6, .8) + rect(a + 1, 7.5, Math.min(b - a - 2, 27), .8) : '';
    case 'a': return `M${a + 1} 2.5L${b - 1} 1.8V4.2L${a + 1} 3.8zM${a + 1} 6.8L${b - 1} 6.2V8.8L${a + 1} 8z`;
    case 'q': return `M${a + 1} 1.5L${a + 5} 2.8H${b - 1}v.9H${a + 5}L${a + 1} 5zM${a + 1} 6L${a + 5} 7.3H${b - 1}v.9H${a + 5}L${a + 1} 9.5z`;
    case 'O': step(1.5, 2.3, x => rect(x, 2.3, 1.3, .9)); break;
    case 'o': step(1.5, 2.7, x => rect(x, 5, 1.5, 1.3)); break;
    case 'l': return rect(a + 1, 7, (b - a) - 2, .9);
  }
  return d;
}

function clips(runs, blue) {
  const fill = blue ? '#38a0c9' : '#858687', edge = blue ? '#4fb3da' : '#a6a7a8';
  let out = '';
  for (const [kind, ...cuts] of runs) {
    const ink = blue ? '#0d5878' : 'aq'.includes(kind) ? '#161718' : '#424446';
    for (let i = 0; i < cuts.length - 1; i++) {
      const a = cuts[i], b = cuts[i + 1];
      out += `<path d="${rect(a + .5, 1, Math.max(b - a - 1, .6), 9.5)}" fill="${fill}" stroke="${edge}" stroke-width="1"/>`;
      if ('Br'.includes(kind)) out += `<path d="${rect(a + 1, kind === 'B' ? 4 : 3.5, b - a - 2, 4.5)}" fill="#1583ae"/><path d="${rect(a + 1, 5.5, b - a - 2, .6)}" fill="#2c98c2"/>`;
      out += `<path d="${preview(kind, a, b)}" fill="${ink}" opacity="${'bfg'.includes(kind) ? .5 : .9}"/>`;
    }
  }
  return out;
}

const trackRow = ([kind, num, name, l, r, , blue]) => `<div class="track ${kind === F ? 'folder' : ''} ${blue ? 'blue' : ''}">
  <div class="badge">${kind ? `<svg><use href="#${kind === F ? 'open' : kind}"/></svg>` : ''}<span>${num}</span></div>
  <div class="pair-ms"><button>m</button><button>s</button></div><b>${name}</b>
  <div class="meter"><i style="height:${l}px"></i><i style="height:${r}px"></i></div></div>`;
document.getElementById('tracks').innerHTML = rows.map(trackRow).join('');
document.getElementById('output').innerHTML = trackRow(['', '', 'Ste...ut', 7, 7, [], 0]);

document.getElementById('lanes').innerHTML = rows.map(r =>
  `<div class="lane"><svg ${box(13)}><path d="M${X0} 12.5h${W}" stroke="#242b30"/>${gridLines(13, '#36414a')}${clips(r[5], r[6])}${gridLines(13, '#123', .25)}</svg></div>`).join('');

document.getElementById('ruler').innerHTML = `<svg ${box(15)}><path d="M234 .5h912.5v14H234z" fill="#2f5580"/><path d="${marks.map(x => `M${x} .5v13`).join('')}" stroke="#b9c8da"/><path d="M234 1h6l-6 6zM1146.5 1h-6l6 6z" fill="#fff"/></svg>` +
  marks.slice(0, 16).map((x, i) => `<span style="left:${((x - X0) / W * 100).toFixed(2)}%">${9 + i * 8}</span>`).join('');

// Audio event with clipped peaks and a fade at the end
let jag = '';
for (const [from, to] of [[242, 350], [680, 790]]) for (let x = from, i = 0; x < to; x += 2, i++) jag += rect(x, 12 + noise(i) * 1.5, 1.8, 1.2) + rect(x, 22 + noise(i + 9), 1.5, 1) + (from > 500 ? rect(x, 1.5 + noise(i), 1.5, 1) : '');
document.getElementById('event').insertAdjacentHTML('afterbegin', `<svg ${box(25)}><path d="M234 1h907v23H234z" fill="#0b5b75"/><path d="M234 1.5h907" stroke="#2a86a5"/>
  <path d="M1114 12.5c5-3 8-5 14-5.500h13V1h-28c4 3 6 5 12 5.500h16v12h-13c-6-1-9-3-14-6z" fill="#38a0c9"/><path d="M1141 1v23h-28c5-4 9-5 14-5.500h5c-7-.5-13-2-18-6 6-4 10-5 18-5.500-8-.5-13-2-19-6z" fill="#38a0c9"/><path d="M1121 6.500h20M1121 18.500h20" stroke="#0b5b75"/>
  <path d="M234 12.5h880" stroke="#06384a"/><path d="${jag}" fill="#07303f"/><path d="M234 24v-4l9 2h28v2z" fill="#38a0c9"/><path d="m235 17 6-4v8z" fill="#0a4155"/><path d="M894.5 1v23" stroke="#05222d"/>${gridLines(25, '#06384a', .25)}</svg>`);

document.getElementById('lower').innerHTML = `<svg ${box(45)}>${gridLines(45, '#36414a')}<path d="M226 28.5h886l21 3 9 5.5h8v1H226z" fill="#3a4045" opacity=".65"/><path d="M226 28.5h886l21 3 9 5.5h8" fill="none" stroke="#666c70"/></svg>`;

// Spectrum bars along the bottom of the page: [x, height] envelope
const env = [[0, 3], [300, 3], [340, 5], [430, 7], [450, 13], [470, 27], [490, 40], [505, 65], [520, 88], [585, 88], [600, 72], [612, 56], [625, 38], [640, 22], [655, 9], [680, 6], [860, 4], [1060, 5], [1130, 10], [1185, 15], [1212, 21], [1240, 31], [1258, 35], [1280, 36]];
let bars = '';
for (let x = 4; x < 1280; x += 7.12) {
  const k = env.findIndex(p => p[0] > x), [x0, h0] = env[k - 1], [x1, h1] = env[k];
  bars += `M${x.toFixed(1)} 100v-${(h0 + (h1 - h0) * (x - x0) / (x1 - x0)).toFixed(1)}`;
}
document.getElementById('spectrum').innerHTML = `<path d="${bars}"/>`;
```
